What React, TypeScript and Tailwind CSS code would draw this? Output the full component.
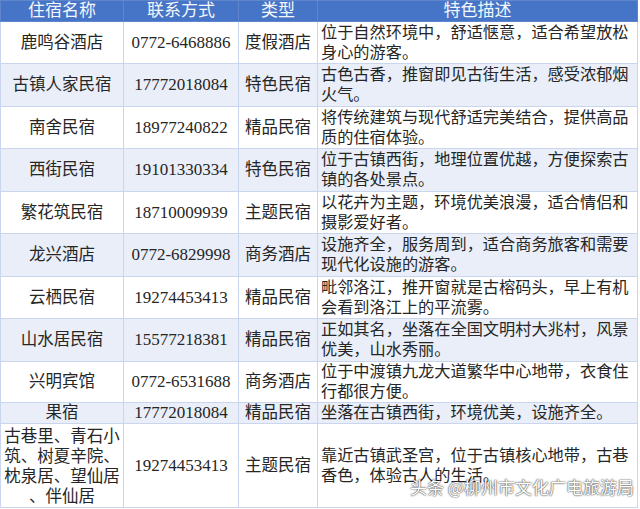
const rows = [
  {
    name: ["鹿鸣谷酒店"],
    phone: "0772-6468886",
    type: "度假酒店",
    desc: ["位于自然环境中，舒适惬意，适合希望放松", "身心的游客。"],
    h: "h-[42px]",
  },
  {
    name: ["古镇人家民宿"],
    phone: "17772018084",
    type: "特色民宿",
    desc: ["古色古香，推窗即见古街生活，感受浓郁烟", "火气。"],
    h: "h-[43px]",
  },
  {
    name: ["南舍民宿"],
    phone: "18977240822",
    type: "精品民宿",
    desc: ["将传统建筑与现代舒适完美结合，提供高品", "质的住宿体验。"],
    h: "h-[42px]",
  },
  {
    name: ["西街民宿"],
    phone: "19101330334",
    type: "特色民宿",
    desc: ["位于古镇西街，地理位置优越，方便探索古", "镇的各处景点。"],
    h: "h-[43px]",
  },
  {
    name: ["繁花筑民宿"],
    phone: "18710009939",
    type: "主题民宿",
    desc: ["以花卉为主题，环境优美浪漫，适合情侣和", "摄影爱好者。"],
    h: "h-[42px]",
  },
  {
    name: ["龙兴酒店"],
    phone: "0772-6829998",
    type: "商务酒店",
    desc: ["设施齐全，服务周到，适合商务旅客和需要", "现代化设施的游客。"],
    h: "h-[43px]",
  },
  {
    name: ["云栖民宿"],
    phone: "19274453413",
    type: "精品民宿",
    desc: ["毗邻洛江，推开窗就是古榕码头，早上有机", "会看到洛江上的平流雾。"],
    h: "h-[42px]",
  },
  {
    name: ["山水居民宿"],
    phone: "15577218381",
    type: "精品民宿",
    desc: ["正如其名，坐落在全国文明村大兆村，风景", "优美，山水秀丽。"],
    h: "h-[43px]",
  },
  {
    name: ["兴明宾馆"],
    phone: "0772-6531688",
    type: "商务酒店",
    desc: ["位于中渡镇九龙大道繁华中心地带，衣食住", "行都很方便。"],
    h: "h-[41px]",
  },
  {
    name: ["果宿"],
    phone: "17772018084",
    type: "精品民宿",
    desc: ["坐落在古镇西街，环境优美，设施齐全。"],
    h: "h-[21px]",
  },
  {
    name: ["古巷里、青石小", "筑、树夏辛院、", "枕泉居、望仙居", "、伴仙居"],
    phone: "19274453413",
    type: "主题民宿",
    desc: ["靠近古镇武圣宫，位于古镇核心地带，古巷", "香色，体验古人的生活。"],
    h: "h-[84px]",
  },
];

function Lines({ lines }: { lines: string[] }) {
  return (
    <>
      {lines.map((l, i) => (
        <span key={i} className="block whitespace-nowrap">
          {l}
        </span>
      ))}
    </>
  );
}

export default function App() {
  const cell = "border border-[#c9d6ee] p-0 align-middle";

  return (
    <div
      className="relative h-[509px] w-[640px] overflow-hidden bg-white text-[16.5px] leading-[20px] text-[#262626]"
      style={{ fontFamily: '"Liberation Serif", "Noto Sans CJK SC", serif' }}
    >
      <table className="table-fixed border-collapse">
        <colgroup>
          <col className="w-[123px]" />
          <col className="w-[115px]" />
          <col className="w-[79px]" />
          <col className="w-[320px]" />
        </colgroup>
        <thead>
          <tr className="h-[21px] bg-[#4674c6] text-[17px] text-[#f4f7fc]">
            <th className="border border-[#5f86cc] p-0 font-normal">住宿名称</th>
            <th className="border border-[#5f86cc] p-0 font-normal">联系方式</th>
            <th className="border border-[#5f86cc] p-0 font-normal">类型</th>
            <th className="border border-[#5f86cc] p-0 font-normal">特色描述</th>
          </tr>
        </thead>
        <tbody>
          {rows.map((r, i) => (
            <tr key={i} className={`${r.h} ${i % 2 === 1 ? "bg-[#e9eef8]" : "bg-white"}`}>
              <td className={`${cell} text-center`}>
                <div className={i === rows.length - 1 ? "pt-[2px]" : ""}>
                  <Lines lines={r.name} />
                </div>
              </td>
              <td className={`${cell} text-center text-[17px]`}>{r.phone}</td>
              <td className={`${cell} text-center`}>{r.type}</td>
              <td className={`${cell} pl-[3px] text-left text-[16.2px]`}>
                <Lines lines={r.desc} />
              </td>
            </tr>
          ))}
        </tbody>
      </table>

      {/* watermark */}
      <div
        className="absolute left-[410px] top-[476px] whitespace-nowrap text-[17px] leading-[22px] text-white [text-shadow:0_0_2px_rgba(0,0,0,0.7),0_0_1px_rgba(0,0,0,0.7)]"
        style={{ fontFamily: '"Noto Sans CJK SC", sans-serif' }}
      >
        头条 @柳州市文化广电旅游局
      </div>
    </div>
  );
}
